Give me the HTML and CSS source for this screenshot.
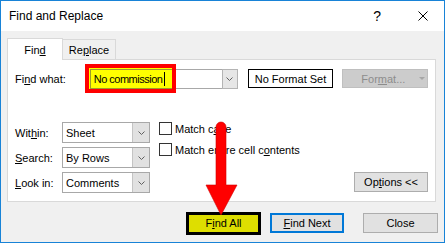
FILE: index.html
```html
<!DOCTYPE html>
<html lang="en">
<head>
    <meta charset="UTF-8">
    <title>Find and Replace</title>
    <link rel="stylesheet" href="styles.css">
</head>
<body>
    <div class="window">
        <div class="titlebar">
            <span class="title">Find and Replace</span>
            <span class="help">?</span>
            <svg class="close-x" width="10" height="10" viewBox="0 0 10 10">
                <path d="M0.5 0.5 L9.5 9.5 M9.5 0.5 L0.5 9.5" stroke="#000" stroke-width="1" fill="none"/>
            </svg>
        </div>
        <div class="content">
            <div class="tabs">
                <div class="tab active">Fin<u>d</u></div>
                <div class="tab">Re<u>p</u>lace</div>
            </div>
            <div class="panel">
                <div class="row-find">
                    <span class="lbl lbl-find">Fi<u>n</u>d what:</span>
                    <div class="combo">
                        <div class="hl">
                            <div class="hl-inner"><span class="typed">No commission</span><span class="caret"></span></div>
                        </div>
                        <div class="combo-rest"></div>
                        <div class="drop">
                            <svg width="7" height="4" viewBox="0 0 7 4"><path d="M0.5 0.5 L3.5 3.5 L6.5 0.5" stroke="#606060" fill="none"/></svg>
                        </div>
                    </div>
                    <div class="fmt-set">No Format Set</div>
                    <div class="btn-disabled">For<u>m</u>at...<span class="tri"></span></div>
                </div>
                <div class="row-opts">
                    <div class="selects">
                        <div class="sel-row">
                            <span class="lbl lbl-sel">Wit<u>h</u>in:</span>
                            <div class="select">
                                <span class="sel-text">Sheet</span>
                                <div class="sel-drop"><svg width="7" height="4" viewBox="0 0 7 4"><path d="M0.5 0.5 L3.5 3.5 L6.5 0.5" stroke="#606060" fill="none"/></svg></div>
                            </div>
                        </div>
                        <div class="sel-row">
                            <span class="lbl lbl-sel"><u>S</u>earch:</span>
                            <div class="select">
                                <span class="sel-text">By Rows</span>
                                <div class="sel-drop"><svg width="7" height="4" viewBox="0 0 7 4"><path d="M0.5 0.5 L3.5 3.5 L6.5 0.5" stroke="#606060" fill="none"/></svg></div>
                            </div>
                        </div>
                        <div class="sel-row">
                            <span class="lbl lbl-sel"><u>L</u>ook in:</span>
                            <div class="select">
                                <span class="sel-text">Comments</span>
                                <div class="sel-drop"><svg width="7" height="4" viewBox="0 0 7 4"><path d="M0.5 0.5 L3.5 3.5 L6.5 0.5" stroke="#606060" fill="none"/></svg></div>
                            </div>
                        </div>
                    </div>
                    <div class="checks">
                        <div class="check"><span class="box"></span>Match c<u>a</u>se</div>
                        <div class="check"><span class="box"></span>Match entire cell c<u>o</u>ntents</div>
                    </div>
                    <div class="opt-wrap">
                        <div class="btn btn-options">Op<u>t</u>ions &lt;&lt;</div>
                    </div>
                </div>
            </div>
            <div class="actions">
                <div class="btn find-all">F<u>i</u>nd All</div>
                <div class="btn find-next"><u>F</u>ind Next</div>
                <div class="btn close">Close</div>
            </div>
        </div>
        <!-- annotation arrow pointing at Find All -->
        <svg class="arrow" width="36" height="98" viewBox="0 0 36 98">
            <path d="M12 7 A5 5 0 0 1 22 7 V65 H33 L17 95 L2 65 H12 Z" fill="#ff0000" stroke="#d00000" stroke-width="0.6"/>
        </svg>
    </div>
</body>
</html>
```

FILE: styles.css
```css
html, body {
    margin: 0;
    padding: 0;
}
body {
    font-family: "Liberation Sans", Arial, sans-serif;
    font-size: 11px;
    color: #000;
    background: #fff;
}
u {
    text-underline-offset: 1px;
}
.window {
    position: relative;
    width: 445px;
    height: 243px;
    box-sizing: border-box;
    border: 1px solid #1883d7;
    background: #f0f0f0;
}
.titlebar {
    height: 30px;
    background: #fff;
    display: flex;
    align-items: center;
}
.title {
    flex: 1;
    padding-left: 8px;
    font-size: 12px;
}
.help {
    font-size: 14px;
    margin-right: 37px;
}
.close-x {
    margin-right: 16px;
}
.content {
    padding: 7px 8px 0 6px;
}
.tabs {
    display: flex;
    align-items: flex-end;
    height: 21px;
}
.tab {
    box-sizing: border-box;
    height: 20px;
    width: 53px;
    border: 1px solid #d9d9d9;
    border-bottom: none;
    border-left: none;
    display: flex;
    align-items: center;
    justify-content: center;
    background: #f0f0f0;
    padding-top: 1px;
}
.tab.active {
    height: 22px;
    width: 56px;
    border-left: 1px solid #d9d9d9;
    background: #fff;
    margin-bottom: -1px;
    position: relative;
    z-index: 1;
}
.panel {
    box-sizing: border-box;
    height: 143px;
    background: #fff;
    border: 1px solid #d9d9d9;
    padding: 4px 7px 0 7px;
}
.row-find {
    display: flex;
    align-items: center;
    height: 29px;
}
.lbl-find {
    width: 70px;
}
.combo {
    display: flex;
    align-items: center;
}
.hl {
    box-sizing: border-box;
    width: 91px;
    height: 29px;
    border: 4px solid #ff0000;
    background: #ffff00;
    padding: 1px 0 0 1px;
}
.hl-inner {
    box-sizing: border-box;
    height: 20px;
    border: 1px solid #9c9c2c;
    border-right: none;
    display: flex;
    align-items: center;
    padding-left: 3px;
}
.typed {
    letter-spacing: -0.5px;
}
.caret {
    width: 1px;
    height: 14px;
    background: #000;
    margin-left: 2px;
}
.combo-rest {
    box-sizing: border-box;
    width: 46px;
    height: 20px;
    background: #fff;
    border-top: 1px solid #a8a8a8;
    border-bottom: 1px solid #a8a8a8;
}
.drop {
    box-sizing: border-box;
    width: 16px;
    height: 20px;
    background: #e6e6e6;
    border: 1px solid #b4b4b4;
    display: flex;
    align-items: center;
    justify-content: center;
}
.fmt-set {
    box-sizing: border-box;
    width: 86px;
    height: 19px;
    margin-left: 10px;
    border: 1px solid #000;
    display: flex;
    align-items: center;
    justify-content: center;
}
.btn-disabled {
    box-sizing: border-box;
    width: 86px;
    height: 19px;
    margin-left: 9px;
    background: #cccccc;
    border: 1px solid #bfbfbf;
    color: #8c8c8c;
    display: flex;
    align-items: center;
    padding-left: 18px;
}
.tri {
    margin-left: 14px;
    width: 0;
    height: 0;
    border-left: 3px solid transparent;
    border-right: 3px solid transparent;
    border-top: 3px solid #a6a6a6;
}
.row-opts {
    display: flex;
    margin-top: 29px;
}
.selects {
    display: flex;
    flex-direction: column;
    gap: 4px;
}
.sel-row {
    display: flex;
    align-items: center;
    height: 21px;
}
.lbl-sel {
    width: 47px;
}
.select {
    box-sizing: border-box;
    width: 88px;
    height: 21px;
    border: 1px solid #a8a8a8;
    display: flex;
    align-items: center;
}
.sel-text {
    flex: 1;
    padding-left: 3px;
}
.sel-drop {
    box-sizing: border-box;
    width: 17px;
    height: 19px;
    background: #e1e1e1;
    border-left: 1px solid #c4c4c4;
    display: flex;
    align-items: center;
    justify-content: center;
}
.checks {
    margin-left: 9px;
    margin-top: -4px;
    display: flex;
    flex-direction: column;
}
.check {
    display: flex;
    align-items: center;
    height: 21px;
}
.box {
    box-sizing: border-box;
    width: 13px;
    height: 13px;
    border: 1px solid #333;
    background: #fff;
    margin-right: 3px;
}
.opt-wrap {
    flex: 1;
    display: flex;
    justify-content: flex-end;
    align-items: flex-end;
    padding-bottom: 1px;
}
.btn {
    box-sizing: border-box;
    height: 20px;
    background: #e1e1e1;
    border: 1px solid #adadad;
    display: flex;
    align-items: center;
    justify-content: center;
}
.btn-options {
    width: 74px;
}
.actions {
    display: flex;
    justify-content: flex-end;
    align-items: center;
    height: 22px;
    margin-top: 10px;
    margin-right: -2px;
}
.find-all {
    width: 75px;
    height: 23px;
    border: 3px solid #000;
    background: #dede00;
}
.find-next {
    width: 74px;
    margin-left: 9px;
    border: 2px solid #0078d7;
}
.close {
    width: 75px;
    margin-left: 19px;
}
.arrow {
    position: absolute;
    left: 203px;
    top: 119px;
}
```
